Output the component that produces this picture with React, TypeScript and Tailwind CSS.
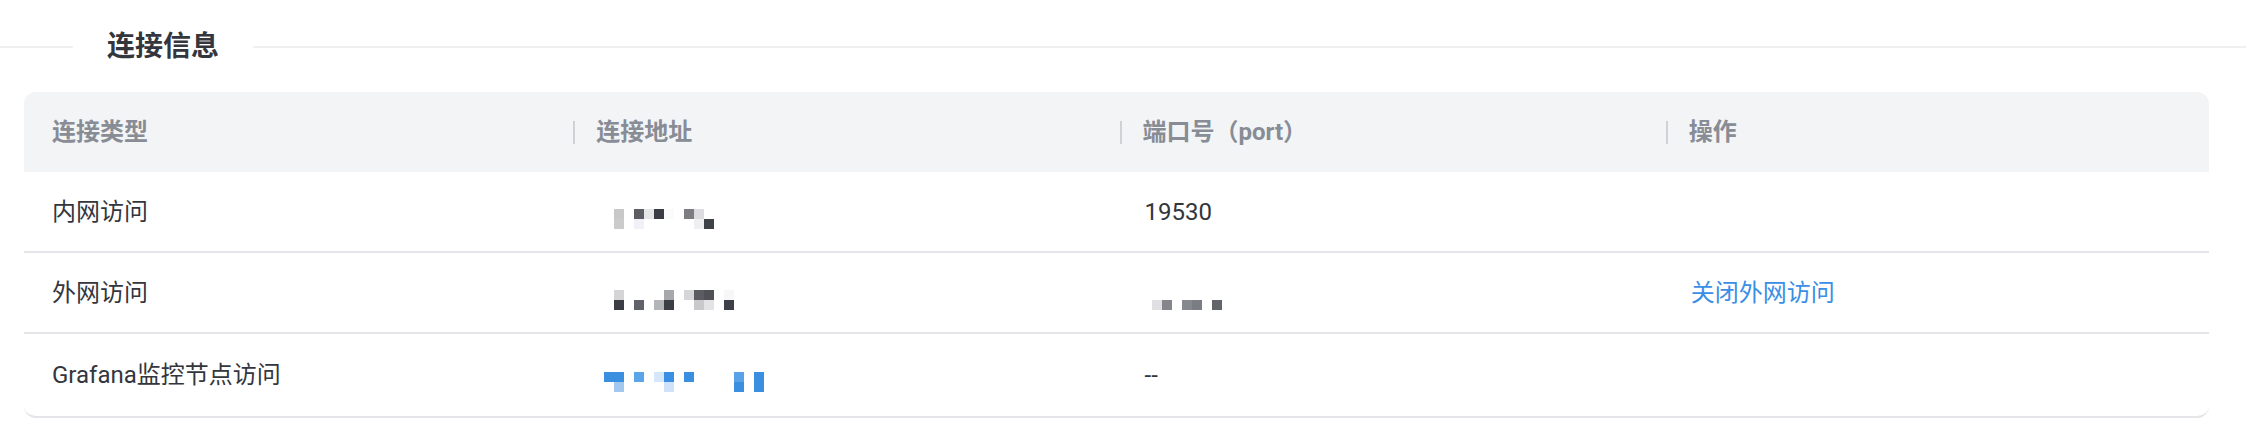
import React from "react";

type Block = [number, number, string];

// mosaic blocks: [x, y, colour] in 10px cells
const addrRows: { x0: number; blocks: Block[] }[] = [
  {
    x0: 16,
    blocks: [
      [0, 0, "#c8c8c8"], [0, 1, "#cbcbcb"],
      [2, 0, "#5d5e63"], [2, 1, "#f3f1f7"],
      [3, 0, "#e6e6e8"],
      [4, 0, "#3a3d45"],
      [5, 0, "#fcfbfc"],
      [7, 0, "#7b7d80"],
      [8, 0, "#dcdcde"], [8, 1, "#efeff1"],
      [9, 1, "#3e4148"],
    ],
  },
  {
    x0: 16,
    blocks: [
      [0, 0, "#d5d5d7"], [0, 1, "#3a3d43"],
      [2, 1, "#5f6268"],
      [4, 1, "#b3b5b8"],
      [5, 0, "#a7a8ab"], [5, 1, "#3b3e44"],
      [7, 0, "#d6d6d9"],
      [8, 0, "#5a5c61"], [8, 1, "#c9c9cc"],
      [9, 0, "#4f5157"], [9, 1, "#e3e3e5"],
      [11, 0, "#f7f7f8"], [11, 1, "#3d4046"],
    ],
  },
  {
    x0: 6,
    blocks: [
      [0, 0, "#3b8fe0"], [1, 0, "#3b8fe0"], [1, 1, "#a3c8f0"],
      [3, 0, "#5aa5e8"],
      [5, 0, "#d6e7fb"],
      [6, 0, "#3a8fe2"], [6, 1, "#cfe2f9"],
      [8, 0, "#3b8fe0"],
      [13, 0, "#5aa2e8"], [13, 1, "#3a8fe0"],
      [15, 0, "#3a8fe0"], [15, 1, "#3a8fe0"],
    ],
  },
];

const portBlocks: Block[] = [
  [0, 1, "#e0e0e2"],
  [1, 1, "#84868b"],
  [3, 1, "#85888c"],
  [4, 1, "#7b7c84"],
  [6, 1, "#62666a"],
];

function Mosaic({ x0, blocks }: { x0: number; blocks: Block[] }) {
  return (
    <svg width={180} height={20} viewBox="0 0 180 20" className="mt-[14px] block">
      {blocks.map(([x, y, c], i) => (
        <rect key={i} x={x0 + x * 10} y={y * 10} width={10} height={10} fill={c} />
      ))}
    </svg>
  );
}

const headers = ["连接类型", "连接地址", "端口号（port）", "操作"];

const Cell = ({ children }: { children?: React.ReactNode }) => (
  <div className="flex items-center pl-[28px]">{children}</div>
);

export default function App() {
  return (
    <div className="w-[2246px] h-[436px] pt-[27px] bg-white font-['Roboto','Noto_Sans_CJK_SC',sans-serif] text-[24px] text-[#33363d]">
      {/* divider title */}
      <div className="flex items-center h-[40px]">
        <div className="w-[73px] h-[2px] bg-[#f0f0f0]" />
        <div className="px-[34px] text-[28px] font-bold leading-[40px] text-[#33363d]">连接信息</div>
        <div className="flex-1 h-[2px] bg-[#f0f0f0]" />
      </div>

      <div className="ml-[24px] mr-[37px] mt-[25px] rounded-[12px] border-b-2 border-[#e4e4e9] overflow-hidden">
        <div className="grid grid-cols-4 h-[80px] bg-[#f3f4f6]">
          {headers.map((h, i) => (
            <div key={h} className="flex items-center">
              {i > 0 ? (
                <>
                  <div className="ml-[3px] w-[2px] h-[23px] bg-[#d0d1d4]" />
                  <span className="ml-[21px] font-bold text-[#878c95]">{h}</span>
                </>
              ) : (
                <span className="ml-[28px] font-bold text-[#878c95]">{h}</span>
              )}
            </div>
          ))}
        </div>

        <div className="grid grid-cols-4 h-[81px] border-b-2 border-[#e4e4e9]">
          <Cell>内网访问</Cell>
          <Cell><Mosaic {...addrRows[0]} /></Cell>
          <Cell>19530</Cell>
          <Cell />
        </div>

        <div className="grid grid-cols-4 h-[81px] border-b-2 border-[#e4e4e9]">
          <Cell>外网访问</Cell>
          <Cell><Mosaic {...addrRows[1]} /></Cell>
          <Cell><Mosaic x0={7} blocks={portBlocks} /></Cell>
          <Cell>
            <span className="text-[#3a8ee6] cursor-pointer">关闭外网访问</span>
          </Cell>
        </div>

        <div className="grid grid-cols-4 h-[82px]">
          <Cell>Grafana监控节点访问</Cell>
          <Cell><Mosaic {...addrRows[2]} /></Cell>
          <Cell>--</Cell>
          <Cell />
        </div>
      </div>
    </div>
  );
}
